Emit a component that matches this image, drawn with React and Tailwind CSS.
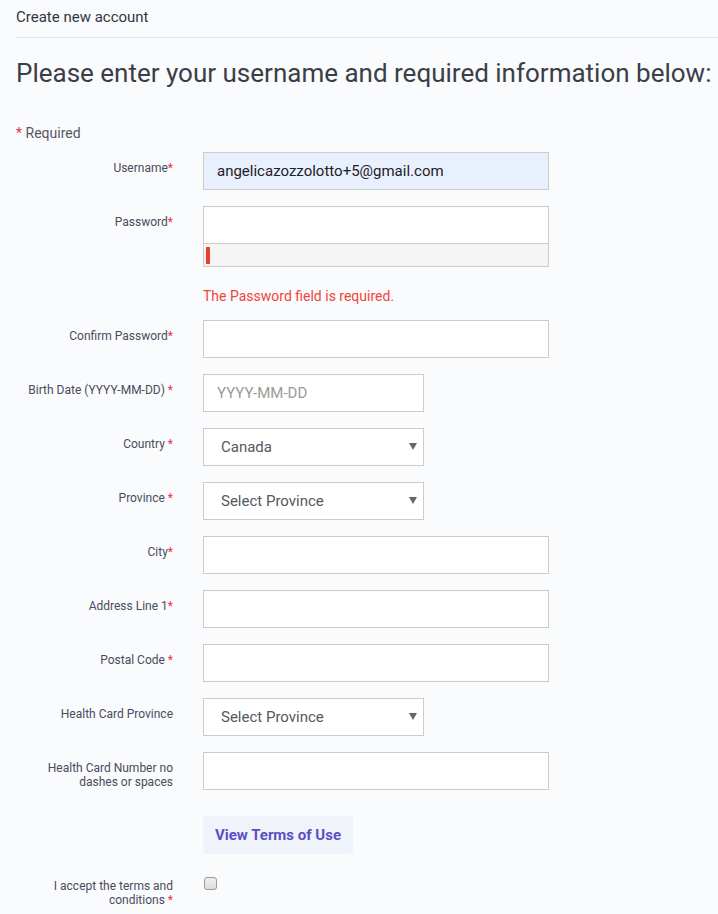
import React from "react";

const Star = () => <span className="text-[#f0304a]">*</span>;

const Row = ({ label, children, className = "" }) => (
  <div className={`flex items-start ${className}`}>
    <div className="w-[157px] shrink-0 pl-[7px] pt-[9px] text-right text-[12px] leading-[14px] text-[#4a4b5c]">
      {label}
    </div>
    <div className="ml-[30px]">{children}</div>
  </div>
);

const Input = ({ value, placeholder, w = "w-[346px]", bg = "bg-white" }) => (
  <div
    className={`${w} h-[38px] border border-[#cccccc] ${bg} flex items-center pl-[13px] text-[15px]`}
  >
    {value ? (
      <span className="text-[#1f2026]">{value}</span>
    ) : (
      <span className="text-[#9a9a9a]">{placeholder}</span>
    )}
  </div>
);

const Select = ({ value }) => (
  <div className="relative w-[221px] h-[38px] border border-[#cccccc] bg-white flex items-center pl-[17px] text-[15px] text-[#555860]">
    {value}
    <span className="absolute right-[6px] top-[14px] w-0 h-0 border-l-[4px] border-r-[4px] border-t-[7px] border-l-transparent border-r-transparent border-t-[#666666]" />
  </div>
);

export default function App() {
  return (
    <div
      className="min-h-[914px] bg-[#f9fbfd] pl-4 pt-[7px] pb-6"
      style={{ fontFamily: "Roboto, 'Liberation Sans', sans-serif" }}
    >
      <div className="text-[15px] leading-[20px] text-[#333640]">Create new account</div>
      <div className="mt-[10px] h-px bg-[#e3e5e8]" />
      <h1 className="mt-[19px] text-[26px] leading-[32px] text-[#3b3e48] whitespace-nowrap">
        Please enter your username and required information below:
      </h1>
      <div className="mt-[34px] text-[14px] leading-[20px] text-[#555862]">
        <Star /> Required
      </div>

      <div className="mt-[9px] flex flex-col gap-4">
        <Row label={<>Username<Star /></>}>
          <Input value="angelicazozzolotto+5@gmail.com" bg="bg-[#e8f0fe]" />
        </Row>

        <Row label={<>Password<Star /></>}>
          <Input />
          <div className="w-[346px] h-[23px] border border-t-0 border-[#cccccc] bg-[#f5f5f5] pl-[2px] pt-[3px]">
            <div className="w-[4px] h-[17px] bg-[#eb4027]" />
          </div>
          <div className="mt-[19px] text-[14px] leading-[20px] text-[#f0463c]">
            The Password field is required.
          </div>
        </Row>

        <Row label={<>Confirm Password<Star /></>} className="-mt-[2px]">
          <Input />
        </Row>

        <Row label={<>Birth Date (YYYY-MM-DD) <Star /></>}>
          <Input w="w-[221px]" placeholder="YYYY-MM-DD" />
        </Row>

        <Row label={<>Country <Star /></>}>
          <Select value="Canada" />
        </Row>

        <Row label={<>Province <Star /></>}>
          <Select value="Select Province" />
        </Row>

        <Row label={<>City<Star /></>}>
          <Input />
        </Row>

        <Row label={<>Address Line 1<Star /></>}>
          <Input />
        </Row>

        <Row label={<>Postal Code <Star /></>}>
          <Input />
        </Row>

        <Row label="Health Card Province">
          <Select value="Select Province" />
        </Row>

        <Row label="Health Card Number no dashes or spaces">
          <Input />
        </Row>

        <Row label="" className="mt-[10px]">
          <button className="w-[150px] h-[38px] rounded-[4px] bg-[#f1f3fb] text-[15px] font-bold text-[#5a4fc4]">
            View Terms of Use
          </button>
        </Row>

        <Row label={<>I accept the terms and conditions <Star /></>}>
          <div className="mt-[7px] ml-[1px] w-[13px] h-[13px] rounded-[3px] border border-[#9a9a9a] bg-gradient-to-b from-[#f0f0f0] to-[#dcdcdc]" />
        </Row>
      </div>
    </div>
  );
}
